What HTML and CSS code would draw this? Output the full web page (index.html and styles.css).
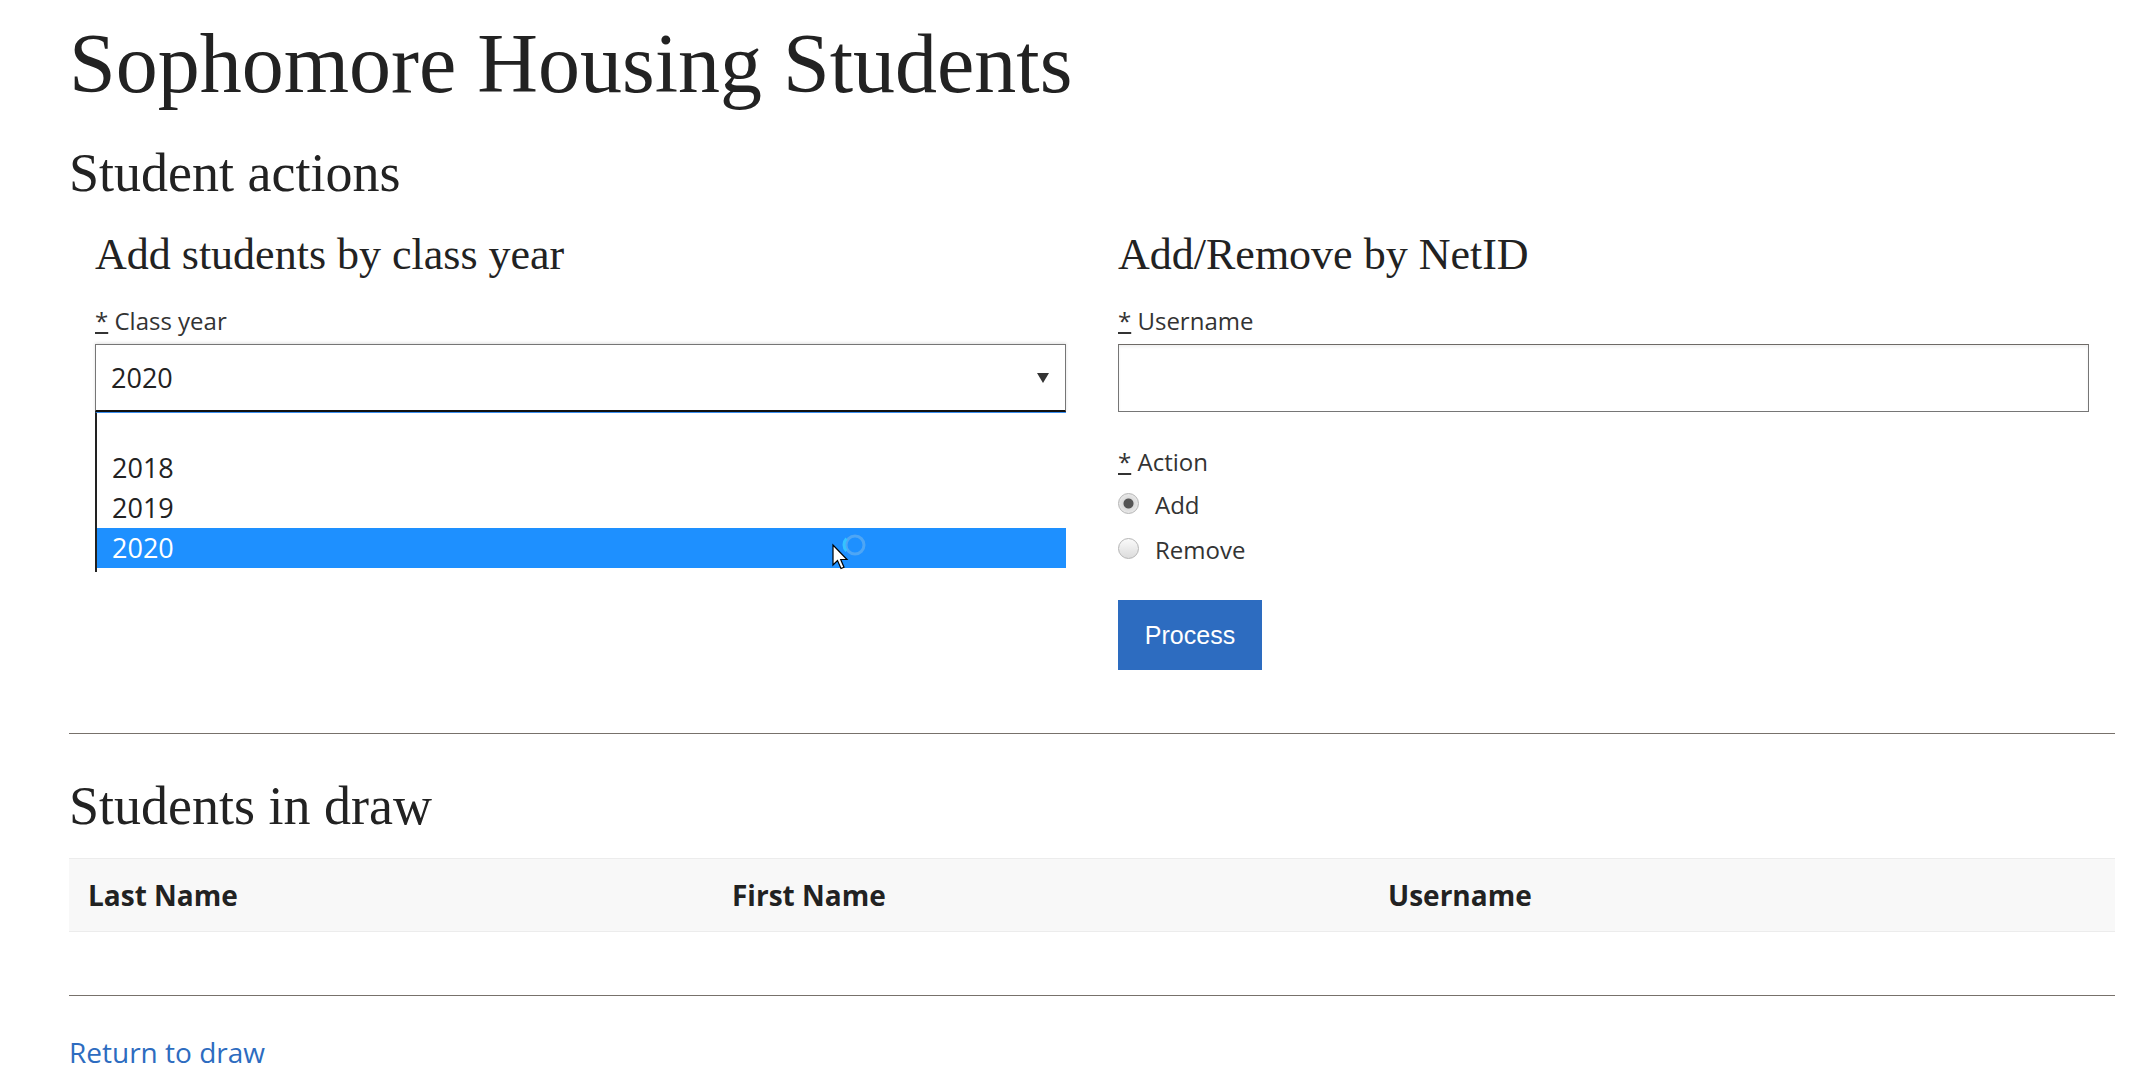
FILE: index.html
```html
<!DOCTYPE html>
<html lang="en">
<head>
<meta charset="utf-8">
<title>Sophomore Housing Students</title>
<link rel="stylesheet" href="styles.css">
</head>
<body>
<main class="page">
  <h1 class="title">Sophomore Housing Students</h1>
  <h2 class="section-title">Student actions</h2>
  <div class="actions">
    <section class="col">
      <h3 class="col-title">Add students by class year</h3>
      <label class="field-label"><abbr class="req" title="required">*</abbr> Class year</label>
      <div class="select-wrap">
        <div class="select">2020<span class="arrow"></span></div>
        <ul class="dropdown">
          <li class="opt"></li>
          <li class="opt">2018</li>
          <li class="opt">2019</li>
          <li class="opt opt-active">2020</li>
        </ul>
        <svg class="cursor" width="40" height="30" viewBox="0 0 40 30">
          <circle cx="23" cy="1" r="9" fill="none" stroke="#4ea6f5" stroke-width="3"/>
          <path d="M14.5 -5.5 A9 9 0 0 0 14.5 7" fill="none" stroke="#35c3ff" stroke-width="3"/>
          <path d="M1 1 L1 21 L5.5 16.5 L9 24.5 L12 23.2 L8.7 15.5 L15 15.5 Z" fill="#fff" stroke="#000" stroke-width="1.2" stroke-linejoin="miter"/>
        </svg>
      </div>
    </section>
    <section class="col">
      <h3 class="col-title">Add/Remove by NetID</h3>
      <label class="field-label" for="username"><abbr class="req" title="required">*</abbr> Username</label>
      <input class="text-input" id="username" type="text">
      <div class="field-label field-label-action"><abbr class="req" title="required">*</abbr> Action</div>
      <label class="radio-row radio-row-first"><input class="radio" type="radio" name="action" checked> <span>Add</span></label>
      <label class="radio-row"><input class="radio" type="radio" name="action"> <span>Remove</span></label>
      <button class="btn" type="button">Process</button>
    </section>
  </div>
  <hr class="rule">
  <h2 class="section-title section-title-draw">Students in draw</h2>
  <table class="students">
    <colgroup>
      <col class="c-last">
      <col class="c-first">
      <col class="c-user">
    </colgroup>
    <thead>
      <tr>
        <th>Last Name</th>
        <th>First Name</th>
        <th>Username</th>
      </tr>
    </thead>
    <tbody></tbody>
  </table>
  <hr class="rule rule-bottom">
  <a class="back-link" href="#">Return to draw</a>
</main>
</body>
</html>
```

FILE: styles.css
```css
html, body {
  margin: 0;
  background: #fff;
}

body {
  color: #222;
  font-family: "Open Sans", "Liberation Sans", sans-serif;
}

.page {
  padding: 14px 15px 0 69px;
}

.title {
  margin: 0;
  font: 400 84px/100px "Liberation Serif", serif;
  color: #222;
}

.section-title {
  margin: 29px 0 0;
  font: 400 54px/60px "Liberation Serif", serif;
  color: #222;
}

.actions {
  display: grid;
  grid-template-columns: 1fr 1fr;
  margin-top: 27px;
}

.col {
  padding: 0 26px;
  min-width: 0;
}

.col-title {
  margin: 0;
  font: 400 44px/50px "Liberation Serif", serif;
  color: #222;
}

.field-label {
  display: block;
  margin-top: 25px;
  font-size: 24px;
  line-height: 32px;
  color: #333;
}

.req {
  text-decoration: underline;
  border: 0;
  cursor: help;
}

.select-wrap {
  position: relative;
  margin-top: 7px;
}

.select {
  box-sizing: border-box;
  height: 68px;
  display: flex;
  align-items: center;
  padding-left: 15px;
  border: 1px solid #767676;
  border-bottom: 2px solid #111;
  box-shadow: 0 -1px 3px rgba(0, 0, 0, 0.12);
  font-size: 27px;
  color: #222;
  background: #fff;
}

.arrow {
  margin-left: auto;
  margin-right: 16px;
  width: 0;
  height: 0;
  border-left: 6px solid transparent;
  border-right: 6px solid transparent;
  border-top: 10px solid #333;
}

.dropdown {
  position: absolute;
  top: 100%;
  left: 0;
  right: 0;
  margin: 0;
  padding: 0 0 4px;
  list-style: none;
  background: #fff;
  border-left: 2px solid #222;
  border-top: 1px solid #3b8ff0;
  box-sizing: border-box;
}

.opt {
  height: 40px;
  line-height: 40px;
  padding-left: 15px;
  font-size: 27px;
  color: #222;
}

.opt:first-child {
  height: 35px;
}

.opt-active {
  background: #1e90ff;
  color: #fff;
}

.cursor {
  position: absolute;
  left: 737px;
  top: 200px;
  overflow: visible;
}

.text-input {
  display: block;
  box-sizing: border-box;
  width: 100%;
  height: 68px;
  margin: 7px 0 0;
  border: 1px solid #767676;
  border-top-color: #6e6a66;
  box-shadow: inset 0 2px 3px rgba(0, 0, 0, 0.06);
  background: #fff;
  font: 24px "Open Sans", sans-serif;
}

.field-label-action {
  margin-top: 34px;
}

.radio-row {
  display: flex;
  align-items: center;
  height: 45px;
  font-size: 24px;
  color: #333;
}

.radio-row-first {
  margin-top: 4px;
}

.radio {
  appearance: none;
  -webkit-appearance: none;
  box-sizing: border-box;
  width: 21px;
  height: 21px;
  margin: -3px 16px 0 0;
  border: 1px solid #b5b5b5;
  border-radius: 50%;
  background: linear-gradient(#fafafa, #dcdcdc);
}

.radio:checked {
  background: radial-gradient(circle, #555 0 4.5px, #dcdcdc 5.5px, #f4f4f4 100%);
}

.btn {
  display: block;
  margin-top: 28px;
  width: 144px;
  height: 70px;
  border: 0;
  padding: 0;
  background: #2d6cc0;
  color: #fff;
  font: 400 25px "Liberation Sans", Arial, sans-serif;
}

.rule {
  height: 0;
  margin: 63px 0 0;
  border: 0;
  border-top: 1px solid #77716b;
}

.section-title-draw {
  margin-top: 42px;
}

.students {
  width: 100%;
  margin-top: 22px;
  border-collapse: collapse;
  table-layout: fixed;
}

.c-last { width: 644px; }
.c-first { width: 656px; }

.students th {
  height: 72px;
  padding: 0 0 0 19px;
  text-align: left;
  font-size: 28px;
  font-weight: 700;
  color: #222;
  background: #f8f8f8;
  border-top: 1px solid #ececec;
  border-bottom: 1px solid #ececec;
}

.back-link {
  display: block;
  margin-top: 38px;
  font-size: 28px;
  line-height: 36px;
  color: #2d6cc0;
  text-decoration: none;
  width: max-content;
}
```
